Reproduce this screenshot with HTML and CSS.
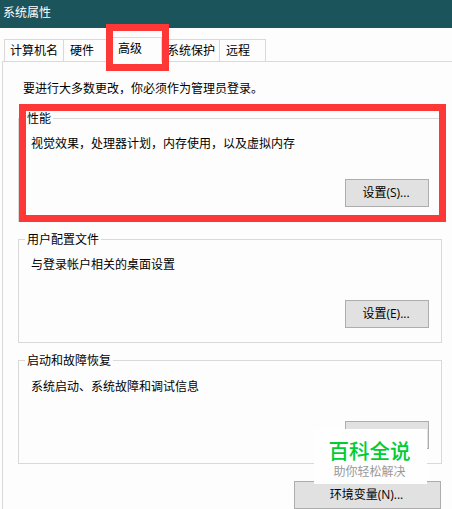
FILE: index.html
```
<!DOCTYPE html>
<html lang="zh-CN">

<head>
    <meta charset="utf-8">
    <title>系统属性</title>
    <link rel="stylesheet" href="styles.css">
</head>

<body>
    <header class="titlebar">系统属性</header>
    <nav class="tabs">
        <a class="tab name">计算机名</a>
        <a class="tab hardware">硬件</a>
        <a class="tab advanced active">高级</a>
        <a class="tab protect">系统保护</a>
        <a class="tab remote">远程</a>
    </nav>
    <main class="panel">
        <p class="hint">要进行大多数更改，你必须作为管理员登录。</p>
        <section class="group">
            <h2>性能</h2>
            <p>视觉效果，处理器计划，内存使用，以及虚拟内存</p>
            <button>设置(S)...</button>
        </section>
        <section class="group">
            <h2>用户配置文件</h2>
            <p>与登录帐户相关的桌面设置</p>
            <button>设置(E)...</button>
        </section>
        <section class="group startup">
            <h2>启动和故障恢复</h2>
            <p>系统启动、系统故障和调试信息</p>
            <button></button>
        </section>
        <button class="env">环境变量(N)...</button>
    </main>
    <!-- 标注框和水印盖在对话框上面 -->
    <div class="mark mark-tab"></div>
    <div class="mark mark-group"></div>
    <div class="watermark">
        <strong>百科全说</strong>
        <span>助你轻松解决</span>
    </div>
</body>

</html>
```

FILE: styles.css
```
* {
    box-sizing: border-box;
}

html,
body {
    margin: 0;
    padding: 0;
    width: 100%;
    height: 100%;
    overflow: hidden;
}

body {
    position: relative;
    background-color: #fdfdfd;
    color: #000;
    font: 12px/18px "Open Sans", "Noto Sans CJK SC", sans-serif;
}

h2,
p {
    margin: 0;
    font-size: 12px;
    font-weight: normal;
}

.titlebar {
    height: 28px;
    padding: 4px 3px;
    background-color: #1c545c;
    color: #fff;
}

.tabs {
    display: flex;
    align-items: flex-end;
    height: 33px;
    padding-left: 4px;
}

.tab {
    height: 22px;
    padding: 2px 0 0 5px;
    border: 1px solid #d9d9d9;
    border-width: 1px 1px 0 0;
    white-space: nowrap;
}

.name {
    width: 60px;
    border-left-width: 1px;
}

.hardware {
    width: 44px;
    padding-left: 6px;
}

.advanced {
    width: 54px;
    padding-left: 10px;
}

.protect {
    width: 58px;
    padding-left: 5px;
}

.remote {
    width: 46px;
    padding-left: 6px;
}

.active {
    height: 25px;
    margin-bottom: -1px;
    background-color: #fdfdfd;
    z-index: 1;
}

.panel {
    display: flex;
    flex-direction: column;
    width: 460px;
    height: 460px;
    margin-left: 2px;
    padding: 18px 0 0 15px;
    border: 1px solid #d9d9d9;
}

.hint {
    height: 38px;
    padding-left: 5px;
}

.group {
    display: flex;
    flex-direction: column;
    flex: none;
    width: 424px;
    height: 104px;
    margin-bottom: 17px;
    border: 1px solid #d9d9d9;
}

.group h2 {
    align-self: flex-start;
    height: 18px;
    margin: -9px 0 0 6px;
    padding: 0 2px;
    background-color: #fdfdfd;
}

.group p {
    margin: 7px 0 0 12px;
}

.startup p {
    margin-top: 8px;
}

button {
    width: 84px;
    height: 28px;
    padding: 0 2px 0 0;
    border: 1px solid #adadad;
    background-color: #e1e1e1;
    color: #000;
    font: inherit;
}

.group button {
    margin: auto 12px 14px auto;
}

.env {
    flex: none;
    width: 147px;
    margin-left: 276px;
}

.mark {
    position: absolute;
    z-index: 2;
    border: 7px solid #fe3737;
}

.mark-tab {
    left: 106px;
    top: 24px;
    width: 63px;
    height: 47px;
}

.mark-group {
    left: 19px;
    top: 104px;
    width: 427px;
    height: 118px;
}

.watermark {
    position: absolute;
    left: 314px;
    top: 429px;
    z-index: 3;
    display: flex;
    flex-direction: column;
    align-items: center;
    width: 113px;
    height: 55px;
    padding: 8px 2px 0 0;
    background-color: #fefefe;
    color: #999;
}

.watermark strong {
    color: #0c3;
    font-size: 20.5px;
    font-weight: 500;
    line-height: 28px;
}

.watermark span {
    line-height: 14px;
}
```
